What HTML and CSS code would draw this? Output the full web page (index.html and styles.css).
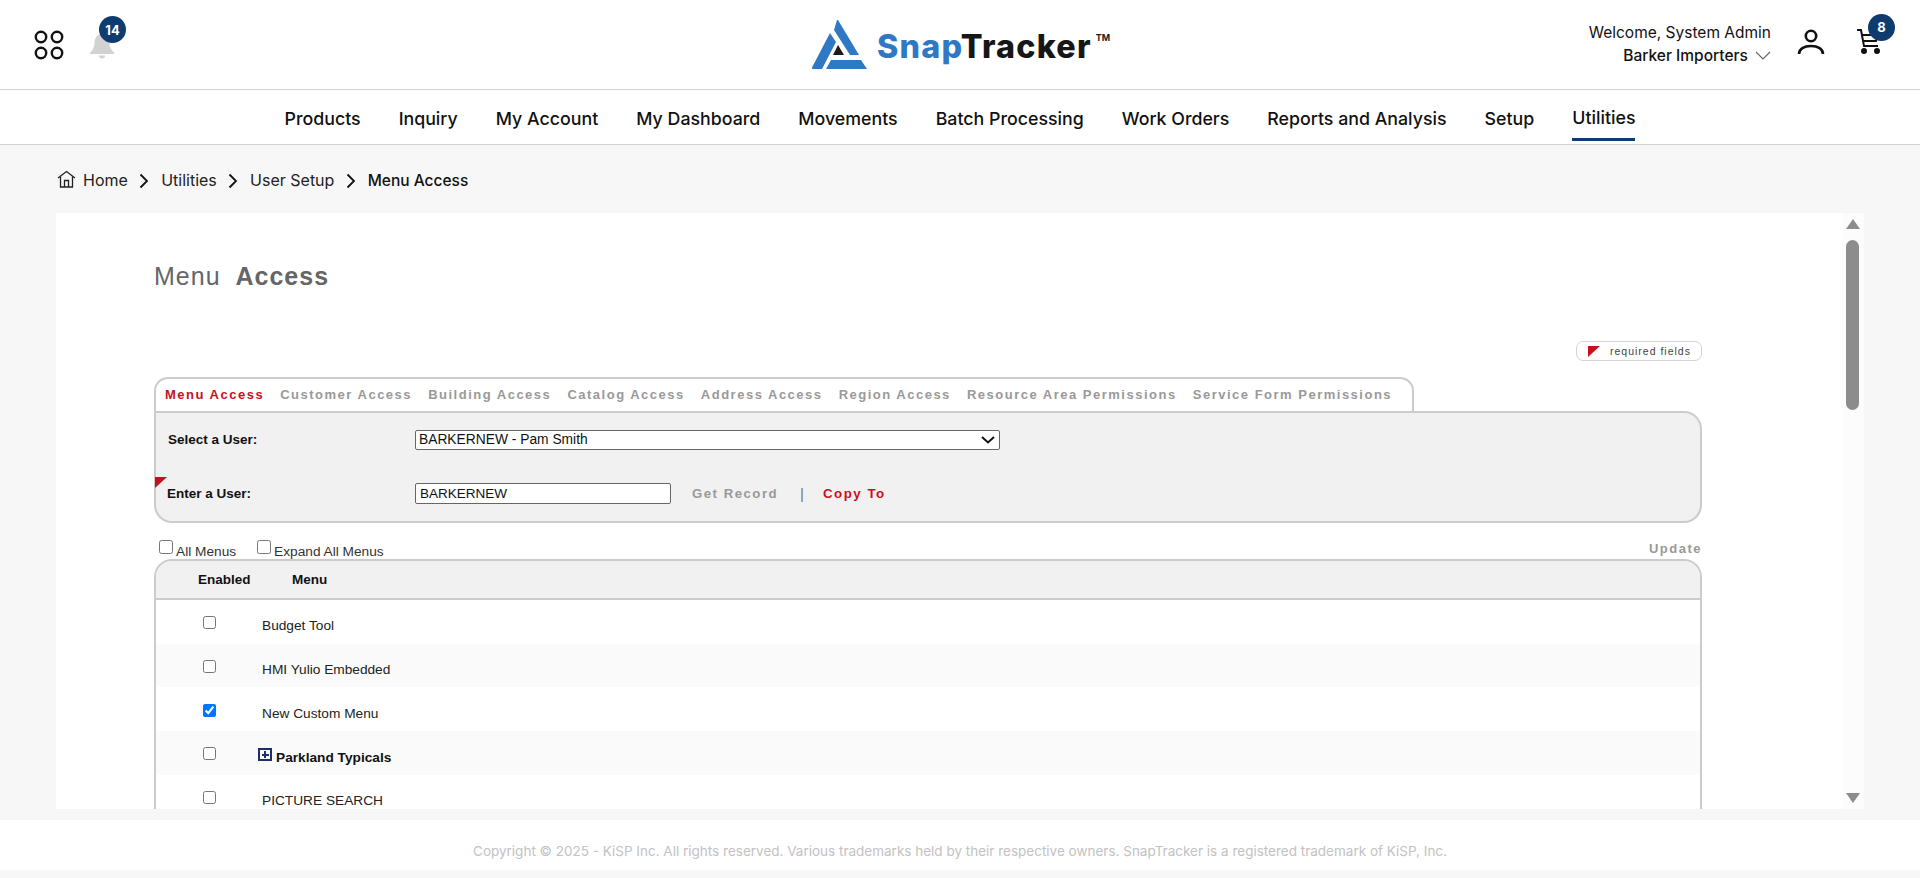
FILE: index.html
```html
<!DOCTYPE html>
<html lang="en">

<head>
  <meta charset="UTF-8">
  <meta name="viewport" content="width=device-width, initial-scale=1.0">
  <title>SnapTracker - Menu Access</title>
  <link rel="stylesheet" href="styles.css">
</head>

<body>
  <header class="topbar">
    <div class="top-left">
      <svg class="apps-icon" width="32" height="32" viewBox="0 0 32 32" fill="none" stroke="#111" stroke-width="2.4">
        <circle cx="8" cy="8" r="5.2"></circle>
        <circle cx="24" cy="8" r="5.2"></circle>
        <circle cx="8" cy="24" r="5.2"></circle>
        <circle cx="24" cy="24" r="5.2"></circle>
      </svg>
      <div class="bell">
        <svg width="26" height="26" viewBox="0 0 26 26" fill="#d2d2d2">
          <path d="M13 1c-5 0-7.500 4-7.500 9 0 4-1.500 7-4.500 9.500v1.500h24v-1.500c-3-2.500-4.500-5.500-4.500-9.500 0-5-2.500-9-7.500-9z"></path>
          <path d="M10 22.500h6c0 2-1.300 3-3 3s-3-1-3-3z"></path>
        </svg>
        <span class="badge">14</span>
      </div>
    </div>

    <div class="logo">
      <svg width="58" height="52" viewBox="0 0 58 52">
        <path fill="#2f78c4" d="M19 14l6 9-14 27H2a1 1 0 0 1-1-1.500z"></path>
        <path fill="#2f78c4" d="M27 1l21 35h-9L23 11l3-10z"></path>
        <path fill="#2f78c4" d="M20 41h30l6 9H15z"></path>
        <path fill="#1d1a1a" d="M27 26l6 10H22z"></path>
      </svg>
      <span class="logo-text"><span class="logo-snap">Snap</span>Tracker</span>
      <span class="logo-tm">TM</span>
    </div>

    <div class="top-right">
      <div class="welcome">
        <div>Welcome, System Admin</div>
        <div class="company">Barker Importers
          <svg width="16" height="10" viewBox="0 0 16 10" fill="none" stroke="#666" stroke-width="1.2">
            <path d="M1 1l7 7 7-7"></path>
          </svg>
        </div>
      </div>
      <svg class="user-icon" width="28" height="28" viewBox="0 0 28 28" fill="none" stroke="#111" stroke-width="2.6">
        <circle cx="14" cy="8" r="5.200"></circle>
        <path d="M2 26c0-5 5-8 12-8s12 3 12 8"></path>
      </svg>
      <div class="cart">
        <svg width="26" height="28" viewBox="0 0 26 28" fill="none" stroke="#111" stroke-width="2">
          <path d="M1 2h4l3 16h14"></path>
          <path d="M6 7h16l-2 6H7"></path>
          <circle cx="8" cy="23" r="2" fill="#111"></circle>
          <circle cx="21" cy="23" r="2" fill="#111"></circle>
        </svg>
        <span class="badge">8</span>
      </div>
    </div>
  </header>

  <nav class="mainnav">
    <a href="#">Products</a>
    <a href="#">Inquiry</a>
    <a href="#">My Account</a>
    <a href="#">My Dashboard</a>
    <a href="#">Movements</a>
    <a href="#">Batch Processing</a>
    <a href="#">Work Orders</a>
    <a href="#">Reports and Analysis</a>
    <a href="#">Setup</a>
    <a href="#" class="active">Utilities</a>
  </nav>

  <div class="crumbs">
    <svg class="home-icon" width="19" height="18" viewBox="0 0 19 18" fill="none" stroke="#222" stroke-width="1.300">
      <path d="M1 8l8.500-6.500L18 8"></path>
      <path d="M3.500 6.500V17h12V6.500"></path>
      <path d="M7.500 17v-6.500h4V17"></path>
    </svg>
    <a href="#">Home</a>
    <svg class="sep" width="10" height="16" viewBox="0 0 10 16" fill="none" stroke="#111" stroke-width="1.800"><path d="M1.500 1.500L8 8l-6.500 6.500"></path></svg>
    <a href="#">Utilities</a>
    <svg class="sep" width="10" height="16" viewBox="0 0 10 16" fill="none" stroke="#111" stroke-width="1.800"><path d="M1.500 1.500L8 8l-6.500 6.500"></path></svg>
    <a href="#">User Setup</a>
    <svg class="sep" width="10" height="16" viewBox="0 0 10 16" fill="none" stroke="#111" stroke-width="1.800"><path d="M1.500 1.500L8 8l-6.500 6.500"></path></svg>
    <span class="current">Menu Access</span>
  </div>

  <main class="panel">
    <div class="panel-body">
      <h1 class="page-title">Menu <strong>Access</strong></h1>

      <div class="required-row">
        <div class="required-pill"><span class="flag"></span>required fields</div>
      </div>

      <div class="tabs">
        <a href="#" class="active">Menu Access</a>
        <a href="#">Customer Access</a>
        <a href="#">Building Access</a>
        <a href="#">Catalog Access</a>
        <a href="#">Address Access</a>
        <a href="#">Region Access</a>
        <a href="#">Resource Area Permissions</a>
        <a href="#">Service Form Permissions</a>
      </div>

      <div class="user-form">
        <div class="form-row select-row">
          <label>Select a User:</label>
          <div class="fake-select">BARKERNEW - Pam Smith
            <svg width="14" height="8" viewBox="0 0 14 8" fill="none" stroke="#111" stroke-width="2"><path d="M1 1l6 5.500L13 1"></path></svg>
          </div>
        </div>
        <div class="form-row enter-row">
          <span class="flag corner"></span>
          <label>Enter a User:</label>
          <input type="text" value="BARKERNEW">
          <a href="#" class="get-record">Get Record</a>
          <span class="divider">|</span>
          <a href="#" class="copy-to">Copy To</a>
        </div>
      </div>

      <div class="options">
        <label><input type="checkbox"><span>All Menus</span></label>
        <label><input type="checkbox"><span>Expand All Menus</span></label>
        <a href="#" class="update">Update</a>
      </div>

      <table class="menu-table">
        <thead>
          <tr>
            <th class="col-enabled">Enabled</th>
            <th>Menu</th>
          </tr>
        </thead>
        <tbody>
          <tr>
            <td class="col-enabled"><input type="checkbox"></td>
            <td>Budget Tool</td>
          </tr>
          <tr>
            <td class="col-enabled"><input type="checkbox"></td>
            <td>HMI Yulio Embedded</td>
          </tr>
          <tr>
            <td class="col-enabled"><input type="checkbox" checked></td>
            <td>New Custom Menu</td>
          </tr>
          <tr>
            <td class="col-enabled"><input type="checkbox"></td>
            <td class="group"><span class="plus"></span>Parkland Typicals</td>
          </tr>
          <tr>
            <td class="col-enabled"><input type="checkbox"></td>
            <td>PICTURE SEARCH</td>
          </tr>
        </tbody>
      </table>
    </div>

    <div class="scroller">
      <span class="arrow-up"></span>
      <span class="thumb"></span>
      <span class="arrow-down"></span>
    </div>
  </main>

  <footer class="footer">Copyright © 2025 - KiSP Inc. All rights reserved. Various trademarks held by their respective owners. SnapTracker is a registered trademark of KiSP, Inc.</footer>
</body>

</html>
```

FILE: styles.css
```css
* {
  box-sizing: border-box;
}

html,
body {
  height: 878px;
  overflow: hidden;
}

body {
  margin: 0;
  background-color: #f7f7f7;
  font-family: Inter, "Liberation Sans", sans-serif;
  color: #111;
}

a {
  color: inherit;
  text-decoration: none;
}

/* Top bar */
.topbar {
  height: 90px;
  background-color: #fff;
  border-bottom: 1px solid #cfd2d6;
  display: grid;
  grid-template-columns: 1fr auto 1fr;
  align-items: center;
  padding: 0 32px;
}

.top-left {
  display: flex;
  align-items: center;
  gap: 24px;
  padding-left: 1px;
}

.bell {
  position: relative;
  width: 26px;
  height: 26px;
  margin-top: 3px;
}

.badge {
  position: absolute;
  top: -17px;
  left: 10px;
  width: 27px;
  height: 27px;
  border-radius: 50%;
  background-color: #0e3c6e;
  color: #fff;
  font-size: 13px;
  font-weight: 700;
  display: flex;
  align-items: center;
  justify-content: center;
}

.logo {
  display: flex;
  align-items: center;
  width: 300px;
  margin-left: 2px;
}

.logo svg {
  flex: none;
}

.logo-text {
  font-family: Inter, sans-serif;
  font-weight: 800;
  font-size: 32.300px;
  letter-spacing: 1.2px;
  color: #161616;
  margin: 4px 0 0 8px;
}

.logo-snap {
  color: #2f78c4;
}

.logo-tm {
  font-size: 9px;
  font-weight: 700;
  color: #222;
  align-self: flex-start;
  margin: 13px 0 0 4px;
}

.top-right {
  display: flex;
  align-items: center;
  justify-content: flex-end;
  padding-right: 5px;
}

.welcome {
  text-align: right;
  font-size: 15.500px;
  line-height: 23px;
  margin: -2px 26px 0 0;
}

.company {
  font-weight: 500;
}

.company svg {
  margin-left: 3px;
}

.user-icon {
  margin: -5px 32px 0 0;
}

.cart {
  position: relative;
  width: 26px;
  height: 28px;
}

.cart svg {
  display: block;
  margin: -3px 0 0 -1px;
}

.cart .badge {
  top: -17px;
  left: 11px;
}

/* Main nav */
.mainnav {
  height: 55px;
  background-color: #fff;
  border-bottom: 1px solid #cfd2d6;
  display: flex;
  justify-content: center;
  gap: 38px;
  font-size: 17.800px;
  font-weight: 500;
}

.mainnav a {
  height: 54px;
  line-height: 57px;
}

.mainnav .active {
  line-height: 55px;
  position: relative;
}

.mainnav .active::after {
  content: "";
  position: absolute;
  left: 0;
  right: 0;
  bottom: 3px;
  height: 3px;
  background-color: #0e3c6e;
}

/* Breadcrumb */
.crumbs {
  height: 68px;
  padding: 2px 0 0 57px;
  display: flex;
  align-items: center;
  font-size: 16px;
  color: #222;
}

.home-icon {
  margin-top: -3px;
}

.crumbs a {
  margin-left: 7px;
}

.crumbs .sep {
  margin: 2px 12px 0 11.300px;
}

.crumbs .sep + a {
  margin-left: 0;
}

.current {
  font-weight: 500;
  font-size: 15.500px;
  color: #111;
}

/* Panel */
.panel {
  position: relative;
  height: 596px;
  margin: 0 56px;
  background-color: #fff;
  overflow: hidden;
  font-family: "Liberation Sans", Arial, sans-serif;
}

.panel-body {
  padding: 0 162px 0 98px;
}

.page-title {
  margin: 0;
  padding-top: 48px;
  height: 109px;
  font-size: 25px;
  line-height: 30px;
  font-weight: normal;
  letter-spacing: 1px;
  color: #666;
}

.page-title strong {
  margin-left: 7px;
}

.required-row {
  display: flex;
  justify-content: flex-end;
  height: 55px;
  padding-top: 19px;
}

.required-pill {
  width: 126px;
  height: 20px;
  border: 1px solid #d4d4d4;
  border-radius: 7px;
  font-size: 10.500px;
  line-height: 17px;
  letter-spacing: 1px;
  color: #444;
  display: flex;
  align-items: center;
  padding-left: 11px;
}

.flag {
  display: inline-block;
  width: 0;
  height: 0;
  border-top: 11px solid #c8101c;
  border-right: 12px solid transparent;
  margin-right: 10px;
}

.tabs {
  width: 1260px;
  height: 35px;
  border: 2px solid #ccc;
  border-bottom: none;
  border-radius: 14px 14px 0 0;
  padding: 7px 0 0 9px;
  display: flex;
  gap: 16.100px;
  font-size: 13px;
  line-height: 17px;
  font-weight: bold;
  letter-spacing: 1.500px;
  color: #999;
}

.tabs .active {
  color: #c8101c;
}

.user-form {
  height: 112px;
  background-color: #f1f1f1;
  border: 2px solid #ccc;
  border-radius: 0 18px 18px 18px;
  margin-top: -1px;
  position: relative;
}

.form-row {
  position: absolute;
  left: 0;
  right: 0;
  display: flex;
  align-items: center;
  font-size: 13.500px;
}

.select-row {
  top: 17px;
}

.enter-row {
  top: 70px;
}

.form-row label {
  width: 259px;
  padding-left: 12px;
  font-weight: bold;
  flex: none;
}

.select-row label {
  margin-top: -2px;
}

.enter-row label {
  padding-left: 11px;
}

.fake-select {
  width: 585px;
  height: 20px;
  background-color: #fff;
  border: 1px solid #666;
  border-radius: 2px;
  font-size: 13.800px;
  line-height: 18px;
  padding: 0 4px 0 3px;
  display: flex;
  align-items: center;
  justify-content: space-between;
}

.enter-row input {
  width: 256px;
  height: 21px;
  border: 1px solid #666;
  border-radius: 2px;
  padding: 0 3px 0 4px;
  font-family: inherit;
  font-size: 13.500px;
  color: #111;
}

.get-record {
  margin-left: 21px;
  font-size: 13.200px;
  font-weight: bold;
  letter-spacing: 1.500px;
  color: #999;
}

.divider {
  margin: 0 19px 0 22px;
  color: #777;
  font-size: 15px;
}

.copy-to {
  font-size: 13.300px;
  font-weight: bold;
  letter-spacing: 1.500px;
  color: #c8101c;
}

.corner {
  position: absolute;
  left: -1px;
  top: -6px;
  margin: 0;
}

.options {
  height: 36px;
  display: flex;
  align-items: flex-end;
  font-size: 13.700px;
  color: #333;
  position: relative;
  padding-left: 5px;
  gap: 21px;
}

.options label {
  display: flex;
  align-items: center;
  height: 20px;
}

.options input {
  margin: 0 3px 4px 0;
  width: 14px;
  height: 14px;
}

.options span {
  position: relative;
  top: 2px;
}

.update {
  position: absolute;
  right: 0;
  bottom: 3px;
  font-size: 13px;
  font-weight: bold;
  letter-spacing: 1.500px;
  color: #999;
}

/* Table */
.menu-table {
  width: 100%;
  border-collapse: separate;
  border-spacing: 0;
  border: 2px solid #ccc;
  border-bottom: none;
  border-radius: 18px 18px 0 0;
  font-size: 13.700px;
  color: #222;
  overflow: hidden;
}

.menu-table th {
  height: 39px;
  background-color: #f1f1f1;
  border-bottom: 2px solid #ccc;
  font-size: 13.500px;
  color: #111;
  text-align: left;
  padding: 0 0 0 30px;
}

.menu-table th.col-enabled {
  padding-left: 42px;
}

.menu-table td {
  height: 43.700px;
  padding: 8px 0 0;
}

.menu-table tbody tr:nth-child(even) td {
  background-color: #fafafa;
}

.menu-table td.col-enabled {
  padding: 2px 0 0 47px;
}

.col-enabled {
  width: 106px;
}

.menu-table input {
  margin: 0;
  width: 13px;
  height: 13px;
  display: block;
}

.group {
  font-weight: bold;
  color: #111;
}

.plus {
  display: inline-block;
  width: 14px;
  height: 13px;
  margin: 0 4px 0 -4px;
  border: 2px solid #1a2f6b;
  vertical-align: 1px;
  background:
    linear-gradient(#1a2f6b, #1a2f6b) center / 7px 2px no-repeat,
    linear-gradient(#1a2f6b, #1a2f6b) center / 2px 7px no-repeat;
}

/* Scroll strip */
.scroller {
  position: absolute;
  top: 0;
  right: 0;
  bottom: 0;
  width: 22px;
  background-color: #fcfcfc;
  display: flex;
  flex-direction: column;
  align-items: center;
  padding: 6px 1px 0 0;
}

.arrow-up {
  width: 0;
  height: 0;
  border-left: 7px solid transparent;
  border-right: 7px solid transparent;
  border-bottom: 10px solid #8c8c8c;
}

.thumb {
  width: 13px;
  height: 170px;
  margin-top: 11px;
  border-radius: 7px;
  background-color: #8c8c8c;
}

.arrow-down {
  width: 0;
  height: 0;
  margin-top: auto;
  margin-bottom: 6px;
  border-left: 7px solid transparent;
  border-right: 7px solid transparent;
  border-top: 10px solid #8c8c8c;
}

/* Footer */
.footer {
  height: 50px;
  margin-top: 11px;
  background-color: #fff;
  text-align: center;
  font-size: 13.500px;
  line-height: 62px;
  color: #c2c2c2;
}
```
